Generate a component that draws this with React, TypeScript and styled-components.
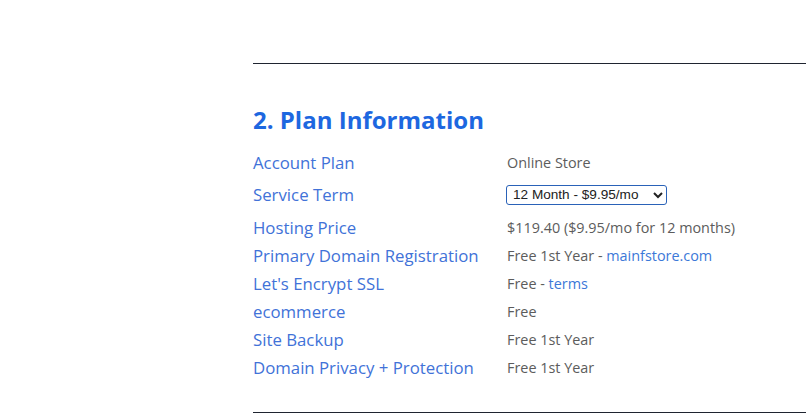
import React from "react"
import styled, { createGlobalStyle } from "styled-components"

const GlobalStyle = createGlobalStyle`
  html, body {
    margin: 0;
    padding: 0;
    background: #ffffff;
    overflow: hidden;
  }
  body {
    font-family: "Open Sans", "Liberation Sans", sans-serif;
  }
`

const Page = styled.div`
  width: 806px;
  height: 418px;
  padding-left: 253px;
  box-sizing: border-box;
  overflow: hidden;
`

const Rule = styled.hr<{ top: number }>`
  display: block;
  height: 0;
  border: 0;
  border-top: 1px solid #1f2430;
  margin: ${(p) => p.top}px 0 0 0;
  width: 600px;
`

const Heading = styled.h2`
  margin: 38px 0 0 0;
  font-size: 24px;
  line-height: 36px;
  font-weight: 700;
  color: #1d67e0;
`

const Rows = styled.div`
  display: flex;
  flex-direction: column;
  margin-top: 10px;
`

const Row = styled.div<{ tall?: boolean }>`
  display: grid;
  grid-template-columns: 254px 1fr;
  align-items: center;
  height: ${(p) => (p.tall ? 37 : 28)}px;
`

const Label = styled.div`
  font-size: 16.8px;
  color: #4172d8;
  white-space: nowrap;
`

const Value = styled.div`
  font-size: 14.4px;
  color: #5c5c5c;
  white-space: nowrap;
`

const Link = styled.a`
  color: #3c78d8;
  text-decoration: none;
`

const Select = styled.select`
  font-family: "Liberation Sans", Arial, sans-serif;
  font-size: 13.6px;
  color: #222;
  height: 20px;
  width: 161px;
  margin-left: -1px;
  padding: 0 2px;
  border: 1px solid #2a62b8;
  border-radius: 3px;
  background: #fff;
`

type Item = {
  label: string
  value: React.ReactNode
  tall?: boolean
}

const items: Item[] = [
  { label: "Account Plan", value: "Online Store" },
  {
    label: "Service Term",
    tall: true,
    value: (
      <Select defaultValue="12">
        <option value="12">12 Month - $9.95/mo</option>
        <option value="24">24 Month - $8.95/mo</option>
        <option value="36">36 Month - $7.95/mo</option>
      </Select>
    ),
  },
  { label: "Hosting Price", value: "$119.40 ($9.95/mo for 12 months)" },
  {
    label: "Primary Domain Registration",
    value: (
      <>
        Free 1st Year - <Link href="#">mainfstore.com</Link>
      </>
    ),
  },
  {
    label: "Let's Encrypt SSL",
    value: (
      <>
        Free - <Link href="#">terms</Link>
      </>
    ),
  },
  { label: "ecommerce", value: "Free" },
  { label: "Site Backup", value: "Free 1st Year" },
  { label: "Domain Privacy + Protection", value: "Free 1st Year" },
]

export default function App() {
  return (
    <>
      <GlobalStyle />
      <Page>
        <Rule top={63} />
        <Heading>2. Plan Information</Heading>
        <Rows>
          {items.map((item) => (
            <Row key={item.label} tall={item.tall}>
              <Label>{item.label}</Label>
              <Value>{item.value}</Value>
            </Row>
          ))}
        </Rows>
        <Rule top={31} />
      </Page>
    </>
  )
}
